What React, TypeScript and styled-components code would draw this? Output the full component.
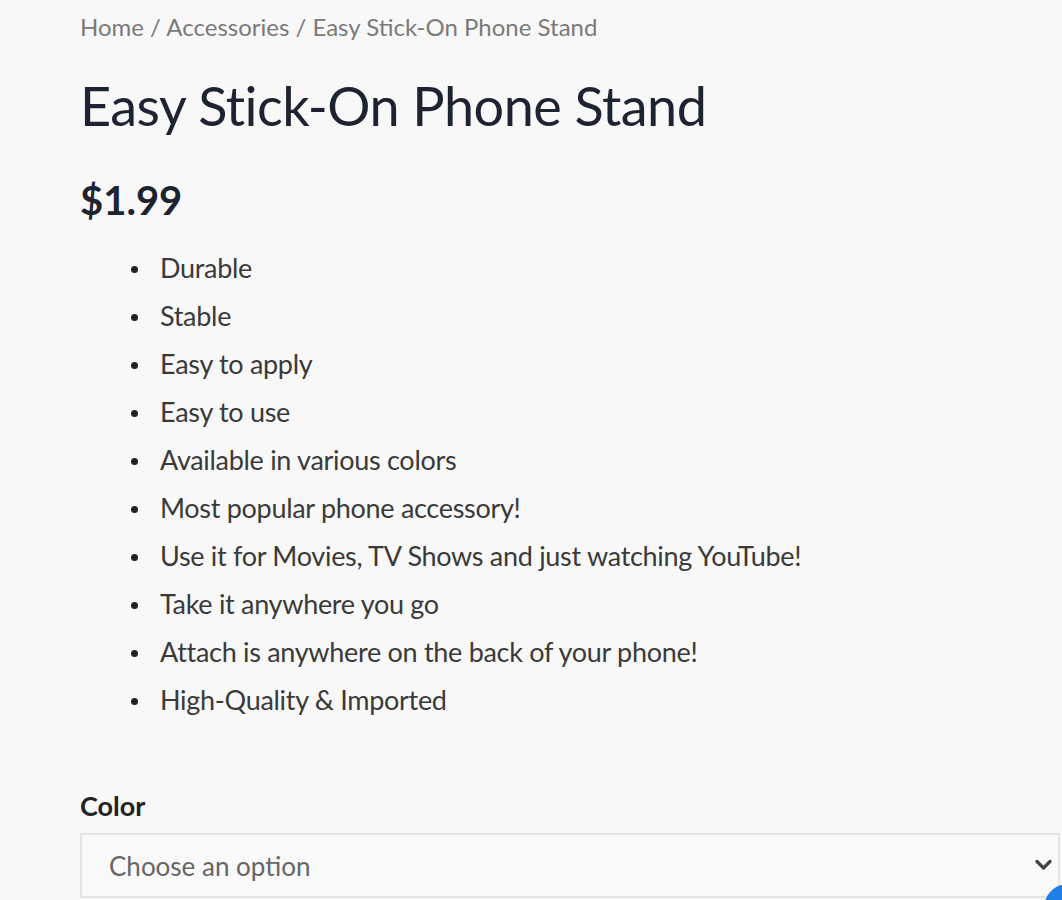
import React from "react";
import styled, { createGlobalStyle } from "styled-components";

const Global = createGlobalStyle`
  html, body { margin: 0; padding: 0; background: #f8f8f8; }
  body { font-family: Lato, "Open Sans", sans-serif; overflow: hidden; }
`;

const Page = styled.div`
  padding: 9px 0 0 80px;
  min-height: 900px;
  box-sizing: border-box;
`;

const Breadcrumb = styled.nav`
  font-size: 24px;
  line-height: 36px;
  color: #7a7a7a;
`;

const Title = styled.h1`
  margin: 28px 0 0;
  font-size: 54px;
  line-height: 65px;
  font-weight: 400;
  color: #1d2330;
  letter-spacing: -0.55px;
`;

const Price = styled.div`
  margin-top: 38px;
  font-size: 40px;
  line-height: 48px;
  font-weight: 700;
  color: #1d2330;
`;

const Features = styled.ul`
  margin: 20px 0 0;
  padding-left: 51px;
  list-style: none;
`;

const Feature = styled.li`
  display: flex;
  align-items: center;
  gap: 22px;
  font-size: 27px;
  line-height: 48px;
  color: #3a3a3a;
  letter-spacing: -0.3px;
`;

const Dot = styled.span`
  flex: none;
  width: 7px;
  height: 7px;
  border-radius: 50%;
  background: #222;
  margin-top: 2px;
`;

const Field = styled.div`
  margin-top: 64px;
`;

const Label = styled.label`
  display: block;
  font-size: 27px;
  line-height: 36px;
  font-weight: 700;
  color: #222;
`;

const SelectWrap = styled.div`
  position: relative;
  margin-top: 9px;
  width: 980px;
`;

const Select = styled.select`
  appearance: none;
  -webkit-appearance: none;
  width: 100%;
  height: 65px;
  box-sizing: border-box;
  border: 2px solid #e4e4e4;
  background: #f9f9f9;
  padding: 0 27px;
  font-family: Lato, sans-serif;
  font-size: 26px;
  color: #666;
  outline: none;
`;

const Chevron = styled.svg`
  position: absolute;
  right: 8px;
  top: 26px;
  width: 17px;
  height: 12px;
  pointer-events: none;
`;

const Bubble = styled.div`
  position: fixed;
  right: -30px;
  bottom: -32px;
  width: 48px;
  height: 48px;
  border-radius: 50%;
  background: #1f7fe6;
`;

const features = [
  "Durable",
  "Stable",
  "Easy to apply",
  "Easy to use",
  "Available in various colors",
  "Most popular phone accessory!",
  "Use it for Movies, TV Shows and just watching YouTube!",
  "Take it anywhere you go",
  "Attach is anywhere on the back of your phone!",
  "High-Quality & Imported",
];

export default function App() {
  return (
    <>
      <Global />
      <Page>
        <Breadcrumb>Home / Accessories / Easy Stick-On Phone Stand</Breadcrumb>
        <Title>Easy Stick-On Phone Stand</Title>
        <Price>$1.99</Price>
        <Features>
          {features.map((f) => (
            <Feature key={f}>
              <Dot />
              {f}
            </Feature>
          ))}
        </Features>
        <Field>
          <Label htmlFor="color">Color</Label>
          <SelectWrap>
            <Select id="color" defaultValue="">
              <option value="">Choose an option</option>
            </Select>
            <Chevron viewBox="0 0 17 12">
              <path d="M2 2.5 L8.5 9 L15 2.5" fill="none" stroke="#444" strokeWidth="3.2" strokeLinecap="round" strokeLinejoin="round" />
            </Chevron>
          </SelectWrap>
        </Field>
      </Page>
      <Bubble />
    </>
  );
}
